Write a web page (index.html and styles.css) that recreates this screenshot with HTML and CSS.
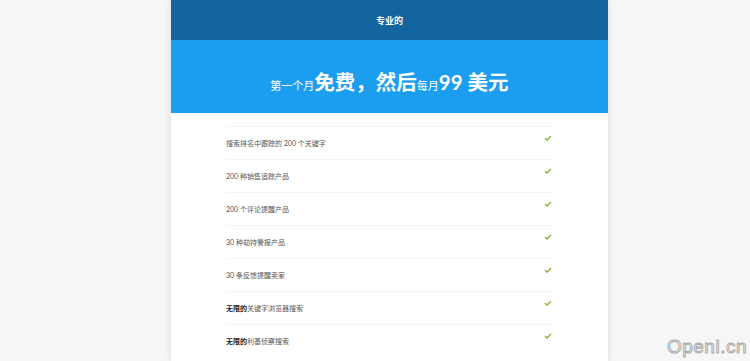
FILE: index.html
```html
<!DOCTYPE html>
<html lang="zh">
<head>
    <meta charset="UTF-8">
    <meta name="viewport" content="width=device-width, initial-scale=1.0">
    <title>专业的</title>
    <link rel="stylesheet" href="styles.css">
</head>
<body>
    <div class="plan">
        <div class="plan-title">专业的</div>
        <div class="plan-price">
            <span class="small">第一个月</span><span class="big">免费，然后</span><span class="small">每月</span><span class="big">99 美元</span>
        </div>
        <ul class="features">
            <li><span>搜索排名中跟踪的 200 个关键字</span><svg class="check" viewBox="0 0 8 6"><path d="M1 3.2 L3 5 L7 1" /></svg></li>
            <li><span>200 种销售追踪产品</span><svg class="check" viewBox="0 0 8 6"><path d="M1 3.2 L3 5 L7 1" /></svg></li>
            <li><span>200 个评论提醒产品</span><svg class="check" viewBox="0 0 8 6"><path d="M1 3.2 L3 5 L7 1" /></svg></li>
            <li><span>30 种劫持警报产品</span><svg class="check" viewBox="0 0 8 6"><path d="M1 3.2 L3 5 L7 1" /></svg></li>
            <li><span>30 条反馈提醒卖家</span><svg class="check" viewBox="0 0 8 6"><path d="M1 3.2 L3 5 L7 1" /></svg></li>
            <li><span><b>无限的</b>关键字浏览器搜索</span><svg class="check" viewBox="0 0 8 6"><path d="M1 3.2 L3 5 L7 1" /></svg></li>
            <li><span><b>无限的</b>利基侦察搜索</span><svg class="check" viewBox="0 0 8 6"><path d="M1 3.2 L3 5 L7 1" /></svg></li>
        </ul>
    </div>
    <div class="watermark">Openl.cn</div>
</body>
</html>
```

FILE: styles.css
```css
body {
    margin: 0;
    background-color: #f6f6f6;
    font-family: "Lato", "Noto Sans CJK SC", sans-serif;
    height: 361px;
    overflow: hidden;
}
.plan {
    width: 437px;
    margin-left: 171px;
    background-color: #ffffff;
    box-shadow: 0 0 6px rgba(0, 0, 0, 0.12);
    min-height: 361px;
}
.plan-title {
    height: 40px;
    background-color: #14659f;
    color: #ffffff;
    font-size: 9px;
    font-weight: bold;
    display: flex;
    justify-content: center;
    align-items: center;
}
.plan-price {
    height: 73px;
    background-color: #1c9ef0;
    color: #ffffff;
    display: flex;
    justify-content: center;
    align-items: baseline;
    padding-top: 26px;
    box-sizing: border-box;
}
.plan-price .small {
    font-size: 11px;
}
.plan-price .big {
    font-size: 20.5px;
    font-weight: bold;
}
.features {
    list-style: none;
    margin: 0;
    padding: 13px 55px 0 55px;
}
.features li {
    display: flex;
    justify-content: space-between;
    align-items: center;
    height: 32px;
    border-top: 1px solid #f5f5f5;
    font-size: 7px;
    color: #555555;
}
.features li b {
    color: #222222;
}
.check {
    width: 8px;
    height: 6px;
    margin-right: 1px;
    margin-top: -10px;
    fill: none;
    stroke: #8fb84a;
    stroke-width: 1.6;
}
.watermark {
    position: absolute;
    right: 3px;
    bottom: 3px;
    font-family: "Liberation Sans", sans-serif;
    font-size: 19px;
    letter-spacing: 0.5px;
    color: #ffffff;
    -webkit-text-stroke: 1px #aaaaaa;
}
```
